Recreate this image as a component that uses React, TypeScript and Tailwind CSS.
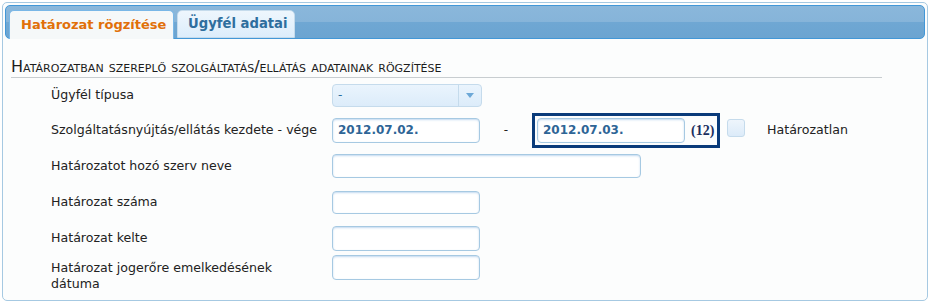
import React from 'react';

const font = { fontFamily: '"DejaVu Sans", Verdana, sans-serif' };

function TextInput({ value, w = 'w-[148px]', h = 'h-[25px]' }: { value?: string; w?: string; h?: string }) {
  return (
    <div
      className={`${w} ${h} rounded-[4px] border border-[#a6c9e2] bg-white shadow-[inset_0_1px_2px_rgba(120,170,220,0.45)] flex items-center pl-[5px] text-[12px] font-bold text-[#2e6596]`}
    >
      {value}
    </div>
  );
}

function Row({ label, h, children, start }: { label: React.ReactNode; h: string; children: React.ReactNode; start?: boolean }) {
  return (
    <div className={`flex ${h} ${start ? 'items-start' : 'items-center'}`}>
      <div className={`w-[281px] text-[12.6px] leading-[16px] text-[#222] ${start ? 'mt-[5px]' : ''}`}>{label}</div>
      {children}
    </div>
  );
}

export default function App() {
  return (
    <div className="w-[929px] h-[302px] bg-white pt-[2px] pl-[2px]" style={font}>
      <div className="w-[926px] h-[299px] rounded-[5px] border border-[#a6c9e2] bg-[#fcfdfd] p-[2px]">
        {/* tab bar */}
        <div className="h-[34px] rounded-[5px] border border-[#4297d7] bg-[linear-gradient(#8ab7db_0,#86b4d9_50%,#6fa7d3_51%,#6ba4d1_100%)] pl-[3px] pt-[4px] flex gap-[3px]">
          <div className="h-[29px] w-[165px] shrink-0 whitespace-nowrap rounded-t-[5px] border border-b-0 border-[#79b7e7] bg-[#f5f8f9] flex items-center pl-[11px] text-[13px] font-bold text-[#e17009]">
            Határozat rögzítése
          </div>
          <div className="h-[28px] w-[118px] shrink-0 whitespace-nowrap rounded-t-[5px] border border-[#c5dbec] bg-[linear-gradient(#eef6fd,#dcedfb)] flex items-center pl-[10px] text-[13.2px] font-bold text-[#2e6e9e]">
            Ügyfél adatai
          </div>
        </div>

        {/* content */}
        <div className="pl-[6px]">
          <div className="w-[871px] mt-[18px] border-b border-[#c8cdd0] pb-[1px] text-[16px] leading-[19px] text-[#1c1c1c] [font-variant:small-caps]">
            Határozatban szereplő szolgáltatás/ellátás adatainak rögzítése
          </div>

          <div className="pl-[40px]">
            <Row label="Ügyfél típusa" h="h-[34px]">
              <div className="w-[150px] h-[23px] rounded-[4px] border border-[#c5dbec] bg-[linear-gradient(#eaf4fd,#dcecfa)] flex items-center text-[12px] text-[#2e6e9e]">
                <div className="flex-1 pl-[5px] border-r border-[#c5dbec] h-full flex items-center">-</div>
                <div className="w-[22px] flex justify-center">
                  <svg width="8" height="5" viewBox="0 0 8 5"><path d="M0 0h8L4 5z" fill="#6da8d7" /></svg>
                </div>
              </div>
            </Row>
            <Row label="Szolgáltatásnyújtás/ellátás kezdete - vége" h="h-[36px]">
              <TextInput value="2012.07.02." />
              <div className="w-[52px] text-center text-[12px] text-[#222]">-</div>
              <div className="w-[188px] h-[35px] border-[3px] border-[#0a3b7a] flex items-center pl-[2px]">
                <TextInput value="2012.07.03." />
                <span className="ml-[6px] text-[14px] font-bold text-[#1a2f5e]" style={{ fontFamily: '"Liberation Serif", serif' }}>
                  (12)
                </span>
              </div>
              <div className="ml-[7px] w-[18px] h-[18px] rounded-[3px] border border-[#c5dbec] bg-[linear-gradient(#eef5fc,#dcebf9)] -mt-[5px]" />
              <span className="ml-[22px] text-[12.6px] text-[#222]">Határozatlan</span>
            </Row>
            <Row label="Határozatot hozó szerv neve" h="h-[35px]">
              <TextInput w="w-[309px]" h="h-[24px]" />
            </Row>
            <Row label="Határozat száma" h="h-[38px]">
              <TextInput h="h-[23px]" />
            </Row>
            <Row label="Határozat kelte" h="h-[34px]">
              <TextInput />
            </Row>
            <Row label={<>Határozat jogerőre emelkedésének<br />dátuma</>} h="h-[40px]" start>
              <TextInput />
            </Row>
          </div>
        </div>
      </div>
    </div>
  );
}
